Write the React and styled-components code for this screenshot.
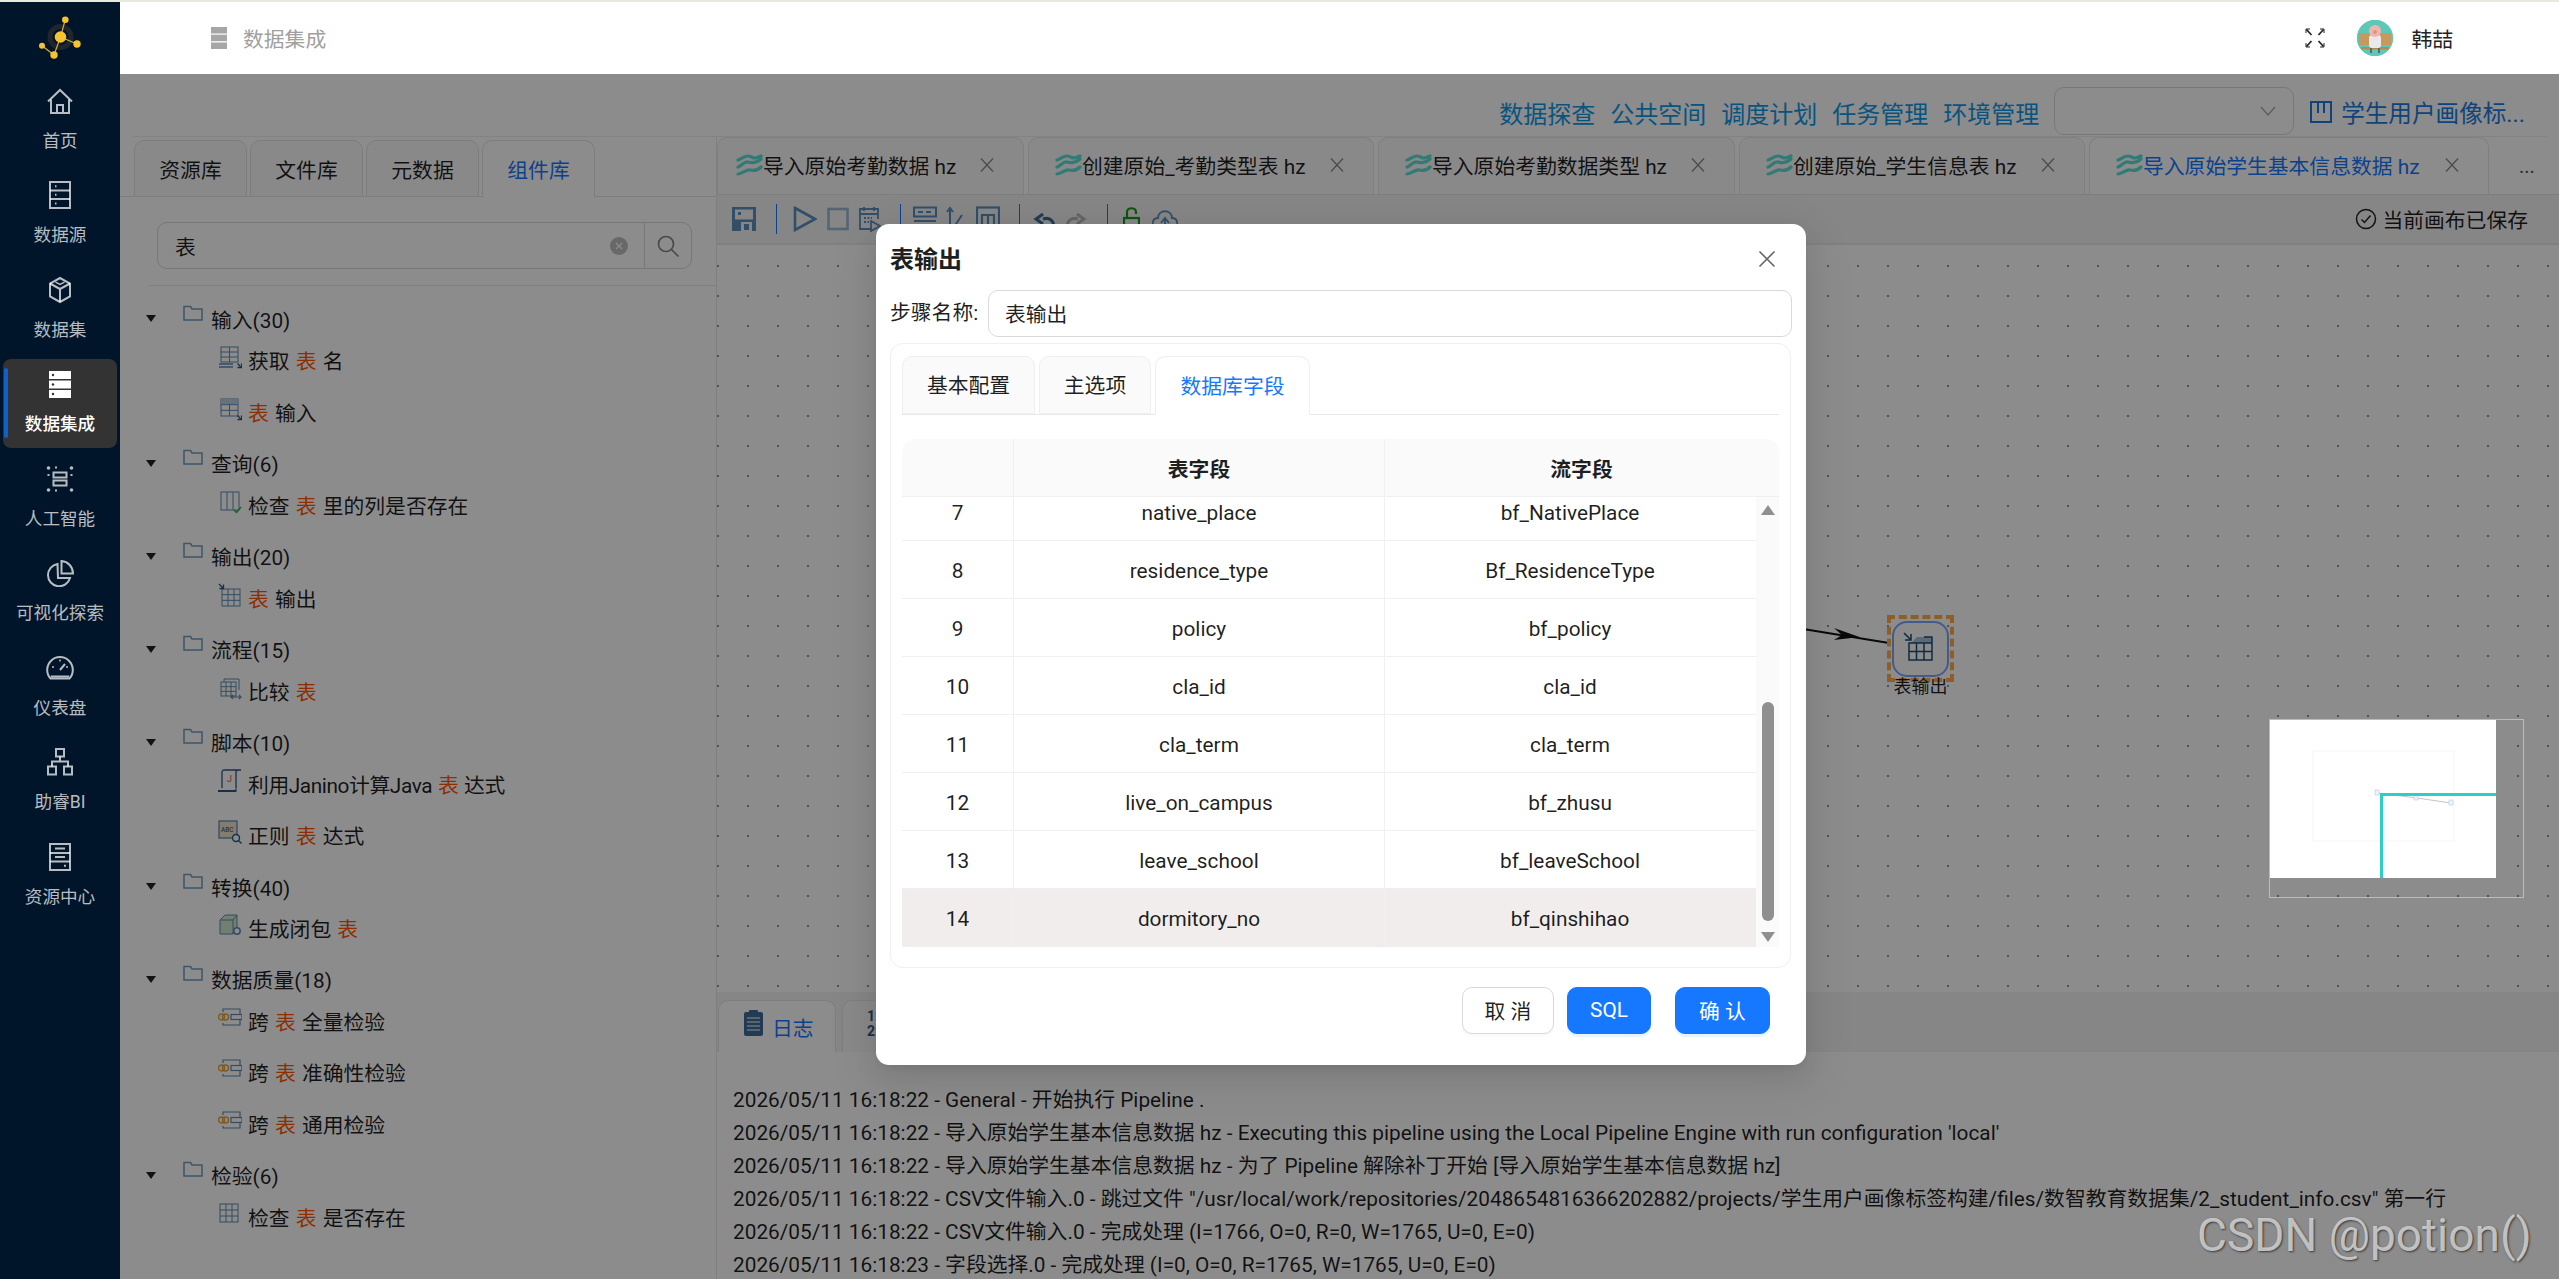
import React from 'react';
import styled, { createGlobalStyle } from 'styled-components';

const FONT = `Roboto, "Noto Sans CJK SC", sans-serif`;

const Global = createGlobalStyle`
  html, body { margin: 0; padding: 0; height: 100%; background: #fff; }
  body { font-family: ${FONT}; color: rgba(0,0,0,.88); overflow: hidden; }
  #root { height: 100%; }
  * { box-sizing: border-box; }
`;

/* ---------- shell ---------- */
const Shell = styled.div`
  position: relative; display: flex; width: 2559px; height: 1279px;
  border-top: 2px solid #e8ebdc; overflow: hidden; background: #fff;
`;
const Sidebar = styled.nav`
  width: 120px; flex: none; background: #001529; display: flex; flex-direction: column;
`;
const LogoBox = styled.div`
  height: 74px; display: flex; align-items: center; justify-content: center;
`;
const NavItem = styled.div`
  position: relative; width: 114px; height: 89px; margin: 0 0 5.45px 3px; border-radius: 8px;
  display: flex; flex-direction: column; align-items: center;
  background: ${p => (p.$active ? '#333333' : 'transparent')};
  color: ${p => (p.$active ? '#ffffff' : 'rgba(255,255,255,.72)')};
`;
const NavBar = styled.span`
  position: absolute; left: 1px; top: 9px; bottom: 10px; width: 4px; border-radius: 3px; background: #1060c8;
`;
const NavIcon = styled.div`
  height: 50px; display: flex; align-items: center; justify-content: center;
`;
const NavLabel = styled.div`
  font-size: 17.6px; line-height: 30px; font-weight: ${p => (p.$active ? 500 : 400)};
`;
const Main = styled.div`
  flex: 1; min-width: 0; display: flex; flex-direction: column;
`;
const Header = styled.header`
  height: 72px; flex: none; display: flex; align-items: center; padding: 0 106px 0 91px; background: #fff;
`;
const Crumb = styled.div`
  display: flex; align-items: center; gap: 16px; font-size: 20.8px; color: #a0a0a0; flex: 1;
`;
const UserArea = styled.div`
  display: flex; align-items: center; font-size: 20.8px; color: #222;
`;
const Avatar = styled.div`
  width: 36px; height: 36px; border-radius: 50%; overflow: hidden; margin: 0 18px 0 32px; background: #5cc9b8;
`;
const Content = styled.div`
  position: relative; flex: 1; min-height: 0; display: flex; flex-direction: column;
`;
const Overlay = styled.div`
  position: absolute; inset: 0; background: rgba(0,0,0,.45); z-index: 10;
`;

/* ---------- link row ---------- */
const LinkRow = styled.div`
  height: 63px; flex: none; margin: 0 11px 0 12px; padding: 14px 23px 0 0; display: flex; align-items: center; justify-content: flex-end;
  gap: 15px; border-bottom: 1px solid #eeeeee;
`;
const TopLink = styled.a`
  font-size: 24px; color: #109ae8; white-space: nowrap;
`;
const ProjectLink = styled.a`
  font-size: 23.6px; color: #1a7ce0; white-space: nowrap; display: flex; align-items: center; gap: 9px; margin-left: 1px;
`;
const SelectBox = styled.div`
  width: 240px; height: 48px; flex: none; border: 1px solid #d9d9d9; border-radius: 10px; margin-top: -2px;
  display: flex; align-items: center; justify-content: flex-end; padding-right: 17px; color: #a8a8a8;
`;

/* ---------- workspace ---------- */
const Workspace = styled.div`
  flex: 1; min-height: 0; display: flex;
`;
const LeftPanel = styled.aside`
  width: 597px; flex: none; border-right: 1px solid #e8e8e8; display: flex; flex-direction: column;
`;
const LeftTabs = styled.div`
  display: flex; gap: 3px; height: 60px; padding: 3px 0 0 14px; border-bottom: 1px solid #e4e4e4;
`;
const LeftTab = styled.div`
  width: 113px; height: ${p => (p.$active ? '58px' : '57px')}; border: 1px solid #e4e4e4; border-radius: 10px 10px 0 0;
  border-bottom-color: ${p => (p.$active ? '#fff' : '#e4e4e4')};
  background: ${p => (p.$active ? '#fff' : '#fafafa')}; color: ${p => (p.$active ? '#1677ff' : 'rgba(0,0,0,.88)')};
  display: flex; align-items: center; justify-content: center; font-size: 20.8px;
`;
const SearchBox = styled.div`
  height: 47px; margin: 25px 24px 0 37px; border: 1px solid #d9d9d9; border-radius: 10px;
  display: flex; align-items: center; font-size: 20.8px;
`;
const SearchText = styled.div`
  flex: 1; padding-left: 17px;
`;
const ClearDot = styled.span`
  width: 18px; height: 18px; border-radius: 50%; background: #bdbdbd; color: #fff; margin-right: 16px;
  display: flex; align-items: center; justify-content: center;
`;
const SearchBtn = styled.div`
  width: 47px; height: 47px; border-left: 1px solid #d9d9d9; display: flex; align-items: center; justify-content: center; color: #888;
`;
const Divider = styled.div`
  height: 1px; margin: 16px 0 12px 28px; background: #ececec;
`;
const GroupRow = styled.div`
  height: 41.6px; display: flex; align-items: center; padding-left: 26px; font-size: 20.8px;
`;
const Caret = styled.span`
  width: 0; height: 0; border-left: 5.5px solid transparent; border-right: 5.5px solid transparent; border-top: 7px solid #222;
`;
const FolderIcon = styled.svg`
  width: 20px; height: 16px; margin: -12px 8px 0 27px; flex: none;
`;
const LeafRow = styled.div`
  height: 41.6px; margin-bottom: 9.8px; display: flex; align-items: center; padding-left: 98px; font-size: 20.8px; white-space: pre;
  word-spacing: 1px; letter-spacing: ${p => (p.$tight ? '-0.4px' : '0')};
`;
const LeafIcon = styled.svg`
  width: 24px; height: 24px; margin: -6px 6px 0 0; flex: none;
`;
const Hit = styled.span`
  color: #ff5500;
`;

const RightPanel = styled.section`
  flex: 1; min-width: 0; display: flex; flex-direction: column;
`;
const DocTabs = styled.div`
  height: 58px; flex: none; display: flex; gap: 4px; align-items: stretch; border-bottom: 1px solid #e4e4e4;
`;
const DocTab = styled.div`
  width: ${p => p.$w}px; flex: none; border: 1px solid #e8e8e8; border-radius: 10px 10px 0 0; border-bottom: none;
  background: ${p => (p.$active ? '#fff' : '#fafafa')}; color: ${p => (p.$active ? '#1677ff' : 'rgba(0,0,0,.88)')};
  display: flex; align-items: center; padding: 0 29px 2px ${p => p.$pl}px; font-size: 20.8px; white-space: nowrap;
`;
const DocName = styled.span`
  flex: 1; min-width: 0;
`;
const More = styled.div`
  margin-left: 26px; align-self: center; font-size: 20px; color: #555; letter-spacing: 0;
`;
const ToolBar = styled.div`
  height: 50px; flex: none; display: flex; align-items: center; padding-left: 15px; background: #f4f4f4;
  border-bottom: 2px solid #e9e9e9; position: relative;
`;
const ToolSep = styled.span`
  width: 1px; height: 30px; background: #1677ff; margin: 0 ${p => p.$r ?? 14}px 0 ${p => p.$l ?? 14}px; flex: none;
`;
const ToolSvg = styled.svg`
  width: ${p => p.$w ?? 24}px; height: 26px; margin-right: ${p => p.$mr ?? 10}px; flex: none;
`;
const Saved = styled.div`
  margin-left: auto; margin-right: 31px; display: flex; align-items: center; gap: 5px; font-size: 20.8px;
`;
const Canvas = styled.div`
  position: relative; flex: 1; min-height: 0;
  background-image: radial-gradient(circle, rgba(60,60,60,.55) 0.7px, transparent 1.1px);
  background-size: 30px 30px; background-position: -14px 6px;
`;
const FlowNode = styled.div`
  position: absolute; left: 1170px; top: 370px; width: 67px; height: 67px; border: 4px dashed #ffae4d;
  display: flex; align-items: center; justify-content: center;
`;
const NodeCard = styled.div`
  width: 57px; height: 56px; border: 2px solid #7ba6ff; border-radius: 15px; background: #fdfdff; padding: 0 5px 4px 0;
  display: flex; align-items: center; justify-content: center;
`;
const NodeLabel = styled.div`
  position: absolute; left: 1165px; top: 430px; width: 77px; text-align: center; font-size: 18px; line-height: 24px;
`;
const FlowArrow = styled.svg`
  position: absolute; left: 1080px; top: 375px; width: 100px; height: 40px;
`;
const BottomPanel = styled.div`
  height: 287px; flex: none; display: flex; flex-direction: column; background: #fff;
`;
const LogTabs = styled.div`
  height: 60px; flex: none; display: flex; gap: 6px; align-items: flex-end; padding-left: 1px; background: #f5f5f5;
`;
const LogTab = styled.div`
  width: ${p => p.$w}px; height: 52px; border: 1px solid #e6e6e6; border-bottom: none; border-radius: 10px 10px 0 0;
  background: ${p => (p.$active ? '#fff' : '#fafafa')}; color: ${p => (p.$active ? '#1677ff' : '#33597d')};
  display: flex; align-items: center; gap: 9px; padding-left: ${p => p.$pl}px; font-size: 20.8px;
`;
const TinyStack = styled.div`
  font-size: 14px; line-height: 15px; font-weight: 700; margin-top: -6px;
`;
const LogBody = styled.div`
  padding: 32px 0 0 16px; font-size: 20.8px; line-height: 33px; white-space: nowrap;
`;

/* ---------- modal ---------- */
const Modal = styled.div`
  position: absolute; left: 756px; top: 150px; width: 930px; height: 841px; background: #fff; border-radius: 13px; z-index: 20;
  padding: 15px 15px 0 14px; display: flex; flex-direction: column;
  box-shadow: 0 10px 26px rgba(0,0,0,.08), 0 5px 10px -6px rgba(0,0,0,.12), 0 15px 45px 13px rgba(0,0,0,.05);
`;
const ModalHead = styled.div`
  height: 36px; flex: none; display: flex; align-items: center; justify-content: space-between;
  font-size: 24px; font-weight: 700; padding-right: 15px; color: #1f1f1f;
`;
const CloseIcon = styled.svg`
  width: 18px; height: 18px; margin-top: 3px;
`;
const FormRow = styled.div`
  height: 47px; margin-top: 15px; flex: none; display: flex; align-items: center; font-size: 20.8px;
`;
const FormLabel = styled.label`
  width: 98px; flex: none; white-space: nowrap; padding-bottom: 6px;
`;
const TextInput = styled.div`
  flex: 1; height: 47px; margin-right: -1px; border: 1px solid #d9d9d9; border-radius: 10px; padding: 0 0 2px 16px; display: flex; align-items: center;
`;
const Card = styled.div`
  margin-top: 6px; height: 625px; flex: none; border: 1px solid #f0f0f0; border-radius: 13px; padding: 12px 11px;
  margin-right: 0; display: flex; flex-direction: column;
`;
const ModalTabs = styled.div`
  height: 59px; flex: none; display: flex; gap: 4px; border-bottom: 1px solid #e8e8e8;
`;
const ModalTab = styled.div`
  height: ${p => (p.$active ? '59px' : '58px')}; width: ${p => p.$w}px; flex: none; border: 1px solid #efefef; border-radius: 10px 10px 0 0;
  border-bottom-color: ${p => (p.$active ? '#fff' : '#efefef')}; padding-bottom: 2px;
  background: ${p => (p.$active ? '#fff' : '#fafafa')}; color: ${p => (p.$active ? '#1677ff' : 'rgba(0,0,0,.88)')};
  display: flex; align-items: center; justify-content: center; font-size: 20.8px;
`;
const Table = styled.div`
  margin-top: 24px; width: 877px; font-size: 20.8px; display: flex; flex-direction: column;
`;
const HeadRow = styled.div`
  height: 58px; display: grid; grid-template-columns: 112px 371px 1fr; background: #fafafa; border-radius: 13px 13px 0 0;
  border-bottom: 1px solid #f0f0f0; font-weight: 700; color: #1f1f1f;
`;
const TableBody = styled.div`
  height: 450px; display: flex;
`;
const Rows = styled.div`
  width: 854px; overflow: hidden; height: 450px;
`;
const RowsShift = styled.div`
  margin-top: -14px;
`;
const Row = styled.div`
  height: 58px; display: grid; grid-template-columns: 112px 371px 1fr;
  background: ${p => (p.$selected ? '#f1eded' : '#fff')};
  border-bottom: ${p => (p.$selected ? 'none' : '1px solid #f0f0f0')};
`;
const Cell = styled.div`
  display: flex; align-items: center; justify-content: center; border-right: 1px solid ${p => (p.$last ? 'transparent' : '#f0f0f0')};
`;
const BodyCell = styled(Cell)`
  padding-top: 2px;
`;
const ScrollTrack = styled.div`
  width: 23px; flex: none; background: #fafafa; display: flex; flex-direction: column; align-items: center; padding: 8px 0 5px;
`;
const ArrowUp = styled.span`
  width: 0; height: 0; border-left: 7px solid transparent; border-right: 7px solid transparent; border-bottom: 10px solid #8f8f8f;
`;
const ArrowDown = styled.span`
  width: 0; height: 0; margin-top: 11px; border-left: 7px solid transparent; border-right: 7px solid transparent; border-top: 10px solid #8f8f8f;
`;
const ScrollThumb = styled.div`
  width: 12px; height: 219px; margin-top: auto; border-radius: 6px; background: #8f8f8f;
`;
const Footer = styled.div`
  margin-top: 19px; display: flex; justify-content: flex-end; padding-right: 21px;
`;
const Button = styled.button`
  height: 47px; width: ${p => p.$w}px; margin-left: ${p => p.$ml}px; border-radius: 10px; font-family: inherit; font-size: 20.8px;
  border: 1px solid ${p => (p.$primary ? '#1677ff' : '#d9d9d9')};
  background: ${p => (p.$primary ? '#1677ff' : '#fff')}; color: ${p => (p.$primary ? '#fff' : 'rgba(0,0,0,.88)')};
  box-shadow: 0 3px 0 ${p => (p.$primary ? 'rgba(5,145,255,.1)' : 'rgba(0,0,0,.02)')}; padding: 0 0 2px;
`;

/* ---------- on top ---------- */
const Minimap = styled.div`
  position: absolute; right: 35px; top: 645px; width: 255px; height: 179px; border: 1px solid #8cc8ff; z-index: 30;
`;
const MinimapSvg = styled.svg`
  display: block; width: 253px; height: 177px;
`;
const Watermark = styled.div`
  position: absolute; left: 2197px; top: 1203px; font-family: Roboto, sans-serif; font-size: 46px; line-height: 60px; z-index: 40;
  color: rgba(215,215,215,.85); text-shadow: 1px 1px 2px rgba(40,40,40,.8); white-space: nowrap;
`;

/* ---------- drawings ---------- */
const Logo = () => (
  <svg width="50" height="50" viewBox="35 15 50 50">
    <circle cx="60.5" cy="38" r="10.5" fill="none" stroke="#20262c" strokeWidth="5" />
    <g stroke="#d9ad33" strokeWidth="1.2">
      <path d="M60.5 38L65.3 20.7M60.5 38L77 45M60.5 38L54 56L42 46.7" fill="none" />
    </g>
    <g fill="#f7c12f">
      <circle cx="60.5" cy="38" r="5.8" /><circle cx="65.3" cy="20.7" r="3.3" /><circle cx="77" cy="45" r="3.7" />
      <circle cx="54" cy="56" r="3.7" /><circle cx="42" cy="46.7" r="3" />
    </g>
  </svg>
);
const S = { fill: 'none', stroke: 'currentColor', strokeWidth: 2 };
const navIcons = {
  home: <svg width="28" height="28" viewBox="0 0 28 28" {...S}><path d="M2 14.5L14 3l12 11.5" /><path d="M5 12.5V26h18V12.5M11 26v-8h6v8" /></svg>,
  source: <svg width="22" height="28" viewBox="0 0 22 28" {...S}><rect x="1" y="1" width="20" height="26" /><path d="M1 9.5h20M1 18h20" /><path d="M6 5.2h1.5M6 13.8h1.5M6 22.5h1.5" /></svg>,
  cube: <svg width="24" height="28" viewBox="0 0 24 28" {...S}><path d="M12 2l10 5.5v13L12 26 2 20.500V7.500z" /><path d="M2 7.500l10 5.500 10-5.500M12 13v13" /><path d="M7.500 6.200L12 8.500l4.500-2.300" strokeWidth="1.500" /></svg>,
  active: <svg width="22" height="27" viewBox="0 0 22 27"><g fill="#fff"><rect y="0" width="22" height="8" /><rect y="9.500" width="22" height="8" /><rect y="19" width="22" height="8" /></g><g fill="#333"><circle cx="4" cy="4" r="1.200" /><circle cx="4" cy="13.500" r="1.200" /><circle cx="4" cy="23" r="1.200" /></g></svg>,
  ai: <svg width="28" height="28" viewBox="0 0 28 28" {...S}><g fill="currentColor" stroke="none"><circle cx="2.500" cy="3" r="1.800" /><circle cx="25.500" cy="3" r="1.800" /><circle cx="2.500" cy="25" r="1.800" /><circle cx="25.500" cy="25" r="1.800" /></g><path d="M9 2.500h10M2.500 9v10M25.500 9v10M9 25.500h10" strokeDasharray="2 40" /><rect x="7.500" y="7.500" width="13" height="5" /><rect x="7.500" y="15.500" width="13" height="5" /></svg>,
  pie: <svg width="28" height="28" viewBox="0 0 28 28" {...S}><path d="M11.500 5A11.200 11.200 0 1 0 24 19H12z" /><path d="M15.500 2v12.500H27A12.500 12.500 0 0 0 15.500 2z" /></svg>,
  gauge: <svg width="28" height="26" viewBox="0 0 28 26" {...S}><path d="M4.500 23.500A12.800 12.800 0 1 1 23.500 23.500z" /><path d="M4.800 21.500h18.400" /><path d="M14 15l5-6" /><path d="M14 4.500v2M6 12h2M20 12h2" strokeWidth="1.500" /></svg>,
  org: <svg width="26" height="28" viewBox="0 0 26 28" {...S}><rect x="9" y="1" width="8" height="7.500" /><rect x="1" y="18.500" width="8" height="8" /><rect x="17" y="18.500" width="8" height="8" /><path d="M13 8.500v5M5 18.500v-5h16v5" /></svg>,
  res: <svg width="22" height="28" viewBox="0 0 22 28" {...S}><rect x="1" y="1" width="20" height="26" /><path d="M1 10h20M1 18.500h20M6 5.500h10M6 14h10" /><path d="M15 22.800h2" /></svg>,
};
const navItems = [
  ['home', '首页'], ['source', '数据源'], ['cube', '数据集'], ['active', '数据集成', true],
  ['ai', '人工智能'], ['pie', '可视化探索'], ['gauge', '仪表盘'], ['org', '助睿BI'], ['res', '资源中心'],
];

const Folder = () => (
  <FolderIcon viewBox="0 0 20 16" fill="none" stroke="#6f9cc4" strokeWidth="1.500"><path d="M1 15V1.500h6.500L9 4h10v11z" /></FolderIcon>
);
const BLUE = '#5f8bb0';
const NAVY = '#2c5a86';
const Grid = ({ x, y, w, h, cols = 3, rows = 3 }) => {
  const d = [];
  for (let i = 1; i < cols; i++) d.push(`M${x + (w * i) / cols} ${y}v${h}`);
  for (let i = 1; i < rows; i++) d.push(`M${x} ${y + (h * i) / rows}h${w}`);
  return <g fill="none" stroke={BLUE} strokeWidth="1"><rect x={x} y={y} width={w} height={h} /><path d={d.join('')} /></g>;
};
const ArrowBR = () => <path d="M19.500 18.500l3.500 3.500M23.500 18.500v4h-4" fill="none" stroke={NAVY} strokeWidth="1.300" />;
const Leaf = ({ children }) => <LeafIcon viewBox="0 0 24 24">{children}</LeafIcon>;
const Chain = () => (
  <Leaf>
    <g fill="none" stroke="#e6a23c" strokeWidth="1.400"><circle cx="3.500" cy="11" r="3" /><circle cx="7.500" cy="11" r="3" /></g>
    <g fill="none" stroke={BLUE} strokeWidth="1.200"><path d="M5 6V3h17v6M22 14v5H5v-2" /><rect x="13" y="8.500" width="11" height="5" /></g>
  </Leaf>
);
const leafIcons = {
  names: <Leaf><Grid x={3} y={2} w={17} h={15} rows={3} cols={2} /><path d="M1 19h14M1 22h14" stroke={BLUE} strokeWidth="1.600" /><ArrowBR /></Leaf>,
  tin: <Leaf><Grid x={3} y={2} w={17} h={17} rows={3} cols={2} /><rect x="3" y="2" width="17" height="5" fill="#b9cfe2" /><ArrowBR /></Leaf>,
  col: <Leaf><rect x="3" y="2" width="18" height="18" fill="none" stroke={BLUE} /><path d="M9 2v18M15 2v18" stroke={BLUE} /><path d="M16 20l2.500 2.500L23 17" fill="none" stroke="#35b13a" strokeWidth="1.500" /></Leaf>,
  tout: <Leaf><Grid x={4} y={6} w={18} h={17} /><path d="M1 1l4 4M5.500 1.500v4h-4" fill="none" stroke={NAVY} strokeWidth="1.300" /></Leaf>,
  cmp: <Leaf><Grid x={3} y={6} w={15} h={14} /><path d="M6 6V3h15v11" fill="none" stroke={BLUE} /><path d="M13 21h10M15 19l-2 2 2 2M21 19l2 2-2 2" fill="none" stroke={BLUE} strokeWidth="1.200" /></Leaf>,
  script: <Leaf><path d="M4 19V3.500C4 2 5 1 6 1h17M20 1c-1.500 0-2 1-2 2.500V19" fill="none" stroke={NAVY} strokeWidth="1.300" /><path d="M0 21h17l1.500-3v5H0z" fill={NAVY} /><text x="9" y="13" fontSize="9" fill="#e25555" fontFamily="Roboto">J</text></Leaf>,
  regex: <Leaf><rect x="1" y="1" width="18" height="17" fill="#efe3cd" stroke={BLUE} strokeWidth="1.300" /><text x="3" y="12" fontSize="6.500" fill="#444" fontFamily="Roboto">ABC</text><circle cx="18" cy="18" r="3.500" fill="#fff" stroke={NAVY} strokeWidth="1.400" /><path d="M20.500 20.500l3 3" stroke={NAVY} strokeWidth="1.400" /></Leaf>,
  box: <Leaf><path d="M2 7l5-5h12v14l-4 5H2z" fill="#cfe8cf" stroke={BLUE} /><path d="M2 7h13v14M15 7l4-5" fill="none" stroke={BLUE} /><circle cx="19" cy="18" r="3.200" fill="#fff" stroke={BLUE} strokeWidth="1.500" /></Leaf>,
  chain: <Chain />,
  grid: <Leaf><Grid x={2} y={2} w={18} h={18} /></Leaf>,
};

const tree = [
  ['输入(30)', [['names', ['获取 ', '表', ' 名']], ['tin', ['', '表', ' 输入']]]],
  ['查询(6)', [['col', ['检查 ', '表', ' 里的列是否存在']]]],
  ['输出(20)', [['tout', ['', '表', ' 输出']]]],
  ['流程(15)', [['cmp', ['比较 ', '表', '']]]],
  ['脚本(10)', [['script', ['利用Janino计算Java ', '表', ' 达式'], true], ['regex', ['正则 ', '表', ' 达式']]]],
  ['转换(40)', [['box', ['生成闭包 ', '表', '']]]],
  ['数据质量(18)', [['chain', ['跨 ', '表', ' 全量检验']], ['chain', ['跨 ', '表', ' 准确性检验']], ['chain', ['跨 ', '表', ' 通用检验']]]],
  ['检验(6)', [['grid', ['检查 ', '表', ' 是否存在']]]],
];

const Wave = () => (
  <svg width="27" height="24" viewBox="0 0 27 24" fill="none" stroke="#5ce0d6" strokeWidth="3.200" strokeLinecap="round" style={{ flex: 'none' }}>
    <path d="M2 7c4-1 6-4 10-4 3 0 4 2 7 2 2 0 4-1 6-2" />
    <path d="M2 15c4-1 6-6 10-5 3 1 9 1 13-3" transform="translate(0 -1)" />
    <path d="M2 21c5 0 8-5 12-4 4 1 7 1 11-3" />
  </svg>
);
const Close = () => (
  <svg width="14" height="14" viewBox="0 0 14 14" stroke="#8a8a8a" strokeWidth="1.300" style={{ flex: 'none' }}><path d="M1 .5l12 13M13 .5L1 13.500" /></svg>
);
const docTabs = [
  ['导入原始考勤数据 hz', 307, 18], ['创建原始_考勤类型表 hz', 346, 26], ['导入原始考勤数据类型 hz', 357, 26], ['创建原始_学生信息表 hz', 346, 26], ['导入原始学生基本信息数据 hz', 400, 26, true],
];

const fields = [
  [7, 'native_place', 'bf_NativePlace'], [8, 'residence_type', 'Bf_ResidenceType'], [9, 'policy', 'bf_policy'], [10, 'cla_id', 'cla_id'],
  [11, 'cla_term', 'cla_term'], [12, 'live_on_campus', 'bf_zhusu'], [13, 'leave_school', 'bf_leaveSchool'], [14, 'dormitory_no', 'bf_qinshihao'],
];
const logs = [
  '2026/05/11 16:18:22 - General - 开始执行 Pipeline .',
  "2026/05/11 16:18:22 - 导入原始学生基本信息数据 hz - Executing this pipeline using the Local Pipeline Engine with run configuration 'local'",
  '2026/05/11 16:18:22 - 导入原始学生基本信息数据 hz - 为了 Pipeline 解除补丁开始 [导入原始学生基本信息数据 hz]',
  '2026/05/11 16:18:22 - CSV文件输入.0 - 跳过文件 "/usr/local/work/repositories/2048654816366202882/projects/学生用户画像标签构建/files/数智教育数据集/2_student_info.csv" 第一行',
  '2026/05/11 16:18:22 - CSV文件输入.0 - 完成处理 (I=1766, O=0, R=0, W=1765, U=0, E=0)',
  '2026/05/11 16:18:23 - 字段选择.0 - 完成处理 (I=0, O=0, R=1765, W=1765, U=0, E=0)',
];

const TB = '#5c8fbd';
const Tools = () => (
  <>
    <ToolSvg $w={24} $mr={0} viewBox="0 0 24 26"><path d="M0 1h24v24H0z" fill={TB} /><rect x="3" y="3.500" width="18" height="10" fill="#f4f4f4" /><rect x="6" y="6" width="3" height="3" fill={TB} /><rect x="9" y="16" width="11" height="9" fill="#f4f4f4" /><rect x="12" y="18" width="5" height="6" fill={TB} /></ToolSvg>
    <ToolSep $l={20} $r={16} />
    <ToolSvg $w={24} $mr={10} viewBox="0 0 24 26" fill="none" stroke={TB} strokeWidth="2.600"><path d="M2 2l20 11L2 24z" /></ToolSvg>
    <ToolSvg $w={22} $mr={10} viewBox="0 0 22 26" fill="none" stroke="#9db9d2" strokeWidth="2.600"><rect x="1.500" y="3" width="19" height="20" /></ToolSvg>
    <ToolSvg $w={22} $mr={19} viewBox="0 0 22 26" fill="none" stroke={TB} strokeWidth="1.800"><path d="M12 23H1V3h18v10M1 8h18M5 1v4M15 1v4" /><path d="M5 12h8M5 16h5" strokeDasharray="2 1.500" /><path d="M12 15l9 5-9 5z" /></ToolSvg>
    <ToolSep $l={0} $r={12} />
    <ToolSvg $w={24} $mr={9} viewBox="0 0 24 26" fill="none" stroke={TB} strokeWidth="2"><rect x="1" y="1.500" width="22" height="9" /><path d="M5 6h5M13 6h5M1 15h22" /></ToolSvg>
    <ToolSvg $w={17} $mr={13} viewBox="0 0 17 26" fill="none" stroke={TB} strokeWidth="2"><path d="M4 3v22M1 6l3-4 3 4M6 24L16 9" /></ToolSvg>
    <ToolSvg $w={24} $mr={19} viewBox="0 0 24 26" fill="none" stroke={TB} strokeWidth="2.200"><rect x="1" y="1.500" width="22" height="24" /><path d="M6 25V9h12v16M12 9v16" /></ToolSvg>
    <ToolSep $l={0} $r={13} />
    <ToolSvg $w={22} $mr={11} viewBox="0 0 22 26" fill="none" stroke="#3d6d9a" strokeWidth="3"><path d="M21 22c0-8-5-11-11-9M10 8l-7 5 7 5" /></ToolSvg>
    <ToolSvg $w={21} $mr={20} viewBox="0 0 21 26" fill="none" stroke="#b9b9b9" strokeWidth="3"><path d="M1 22c0-8 5-11 11-9M11 8l7 5-7 5" /></ToolSvg>
    <ToolSep $l={0} $r={15} />
    <ToolSvg $w={17} $mr={12} viewBox="0 0 17 26" fill="none" stroke="#1a9a1a" strokeWidth="2.200"><path d="M4 12V6c0-5 9-5 9 0v2" /><rect x="1" y="12" width="15" height="13" /></ToolSvg>
    <ToolSvg $w={26} $mr={0} viewBox="0 0 26 26" fill="none" stroke={TB} strokeWidth="1.800"><path d="M7 22H4C-1 20 0 12 6 12 6 3 20 3 20 12c6 0 7 8 2 10h-3" /><path d="M13 24V13M9 17l4-5 4 5" /></ToolSvg>
  </>
);

export default function App() {
  return (
    <Shell>
      <Global />
      <Sidebar>
        <LogoBox><Logo /></LogoBox>
        {navItems.map(([k, label, active]) => (
          <NavItem key={k} $active={active}>
            {active && <NavBar />}
            <NavIcon>{navIcons[k]}</NavIcon>
            <NavLabel $active={active}>{label}</NavLabel>
          </NavItem>
        ))}
      </Sidebar>
      <Main>
        <Header>
          <Crumb>
            <svg width="16" height="22" viewBox="0 0 16 22"><g fill="#a6a6a6"><rect width="16" height="6.500" /><rect y="7.700" width="16" height="6.500" /><rect y="15.500" width="16" height="6.500" /></g></svg>
            数据集成
          </Crumb>
          <UserArea>
            <svg width="20" height="20" viewBox="0 0 20 20" fill="none" stroke="#222" strokeWidth="1.700"><path d="M1.500 1.500l5 5.500M18.500 1.500l-5 5.500M1.500 18.500l5-5.500M18.500 18.500l-5-5.500" /><path d="M1 5V1h4M15 1h4v4M1 15v4h4M19 15v4h-4" strokeWidth="1" /></svg>
            <Avatar>
              <svg width="36" height="36" viewBox="0 0 36 36"><rect width="36" height="36" fill="#5cc9b8" /><rect x="2" y="13" width="32" height="12" fill="#c69a5b" /><rect x="4" y="27" width="28" height="2.500" fill="#b58a4f" /><rect x="12" y="15" width="12" height="13" rx="3" fill="#e9e9e9" /><circle cx="18" cy="11" r="6" fill="#f0b6ae" /><circle cx="18" cy="12" r="2" fill="#e58f86" /><path d="M14 28v5M22 28v5" stroke="#666" strokeWidth="2" /></svg>
            </Avatar>
            韩喆
          </UserArea>
        </Header>
        <Content>
          <LinkRow>
            {['数据探查', '公共空间', '调度计划', '任务管理', '环境管理'].map(t => <TopLink key={t}>{t}</TopLink>)}
            <SelectBox>
              <svg width="16" height="10" viewBox="0 0 16 10" fill="none" stroke="currentColor" strokeWidth="1.300"><path d="M1 1l7 8 7-8" /></svg>
            </SelectBox>
            <ProjectLink>
              <svg width="22" height="24" viewBox="0 0 22 24" fill="none" stroke="currentColor" strokeWidth="2"><rect x="1" y="2" width="20" height="20" /><path d="M8 3v10M14 3v10" /></svg>
              学生用户画像标...
            </ProjectLink>
          </LinkRow>
          <Workspace>
            <LeftPanel>
              <LeftTabs>
                {['资源库', '文件库', '元数据', '组件库'].map((t, i) => <LeftTab key={t} $active={i === 3}>{t}</LeftTab>)}
              </LeftTabs>
              <SearchBox>
                <SearchText>表</SearchText>
                <ClearDot><svg width="8" height="8" viewBox="0 0 8 8" stroke="#fff" strokeWidth="1.200"><path d="M1 1l6 6M7 1L1 7" /></svg></ClearDot>
                <SearchBtn><svg width="24" height="24" viewBox="0 0 24 24" fill="none" stroke="currentColor" strokeWidth="1.700"><circle cx="10" cy="10" r="7.500" /><path d="M15.500 15.500l7 7" /></svg></SearchBtn>
              </SearchBox>
              <Divider />
              {tree.map(([g, leaves]) => (
                <React.Fragment key={g}>
                  <GroupRow><Caret /><Folder />{g}</GroupRow>
                  {leaves.map(([ic, [a, h, b], tight]) => (
                    <LeafRow key={a + b} $tight={tight}>{leafIcons[ic]}{a}<Hit>{h}</Hit>{b}</LeafRow>
                  ))}
                </React.Fragment>
              ))}
            </LeftPanel>
            <RightPanel>
              <DocTabs>
                {docTabs.map(([t, w, pl, a]) => (
                  <DocTab key={t} $w={w} $pl={pl} $active={a}><Wave /><DocName>{t}</DocName><Close /></DocTab>
                ))}
                <More>...</More>
              </DocTabs>
              <ToolBar>
                <Tools />
                <Saved>
                  <svg width="22" height="22" viewBox="0 0 22 22" fill="none" stroke="#222" strokeWidth="1.500"><circle cx="11" cy="11" r="9.500" /><path d="M6.500 11.500l3 3 6-7" /></svg>
                  当前画布已保存
                </Saved>
              </ToolBar>
              <Canvas>
                <FlowArrow viewBox="0 0 100 40">
                  <path d="M0 8L92 23" stroke="#111" strokeWidth="1.800" fill="none" />
                  <path d="M62.500 17L37 8l8 7-8 5z" fill="#111" />
                </FlowArrow>
                <FlowNode>
                  <NodeCard>
                    <svg width="30" height="30" viewBox="0 0 30 30" fill="none">
                      <path d="M14 5h15v6H8z" fill="#a9c2d8" />
                      <g stroke="#1d4c78" strokeWidth="1.500"><path d="M21 5h8v23H6V11h23M6 19.500h23M13.500 11v17M21 11v17" /><path d="M1 1l6 6M8 2v6H2" /></g>
                    </svg>
                  </NodeCard>
                </FlowNode>
                <NodeLabel>表输出</NodeLabel>
              </Canvas>
              <BottomPanel>
                <LogTabs>
                  <LogTab $w={118} $pl={25} $active>
                    <svg width="19" height="26" viewBox="0 0 19 26" style={{ marginTop: -8 }}><rect y="2" width="19" height="24" rx="2" fill="#3e6a97" /><g stroke="#fff" strokeWidth="1.200"><path d="M3 8h13M3 12h13M3 16h13M3 20h13" /></g><rect x="5" y="0" width="9" height="4" rx="1" fill="#3e6a97" /></svg>
                    日志
                  </LogTab>
                  <LogTab $w={158} $pl={24}><TinyStack>1:<br />2:</TinyStack></LogTab>
                </LogTabs>
                <LogBody>{logs.map(l => <div key={l}>{l}</div>)}</LogBody>
              </BottomPanel>
            </RightPanel>
          </Workspace>
          <Overlay />
          <Modal>
            <ModalHead>
              表输出
              <CloseIcon viewBox="0 0 18 18" stroke="#666" strokeWidth="1.600"><path d="M1.500 1.500l15 15M16.500 1.500l-15 15" /></CloseIcon>
            </ModalHead>
            <FormRow>
              <FormLabel>步骤名称:</FormLabel>
              <TextInput>表输出</TextInput>
            </FormRow>
            <Card>
              <ModalTabs>
                <ModalTab $w={133}>基本配置</ModalTab>
                <ModalTab $w={112}>主选项</ModalTab>
                <ModalTab $w={155} $active>数据库字段</ModalTab>
              </ModalTabs>
              <Table>
                <HeadRow>
                  <Cell />
                  <Cell>表字段</Cell>
                  <Cell $last>流字段</Cell>
                </HeadRow>
                <TableBody>
                  <Rows>
                    <RowsShift>
                      {fields.map(([n, a, b]) => (
                        <Row key={n} $selected={n === 14}>
                          <BodyCell>{n}</BodyCell>
                          <BodyCell>{a}</BodyCell>
                          <BodyCell $last>{b}</BodyCell>
                        </Row>
                      ))}
                    </RowsShift>
                  </Rows>
                  <ScrollTrack><ArrowUp /><ScrollThumb /><ArrowDown /></ScrollTrack>
                </TableBody>
              </Table>
            </Card>
            <Footer>
              <Button $w={92}>取 消</Button>
              <Button $w={84} $ml={13} $primary>SQL</Button>
              <Button $w={95} $ml={24} $primary>确 认</Button>
            </Footer>
          </Modal>
          <Minimap>
            <MinimapSvg viewBox="0 0 253 177">
              <rect x="0" y="0" width="226" height="158" fill="#fff" />
              <rect x="43" y="31" width="141" height="90" fill="#fff" stroke="#f5f5f5" />
              <path d="M108 73L147 78L181 83" stroke="#c4c4c4" fill="none" />
              <g fill="#eef3ff" stroke="#a9c0ec" strokeWidth=".5"><rect x="105" y="70" width="4" height="5" /><rect x="144" y="75" width="4" height="5" /><rect x="179" y="80" width="4" height="5" /></g>
              <path d="M111.500 158V74.500H226" stroke="#2bd0c4" strokeWidth="3" fill="none" />
            </MinimapSvg>
          </Minimap>
        </Content>
      </Main>
      <Watermark>CSDN @potion()</Watermark>
    </Shell>
  );
}
